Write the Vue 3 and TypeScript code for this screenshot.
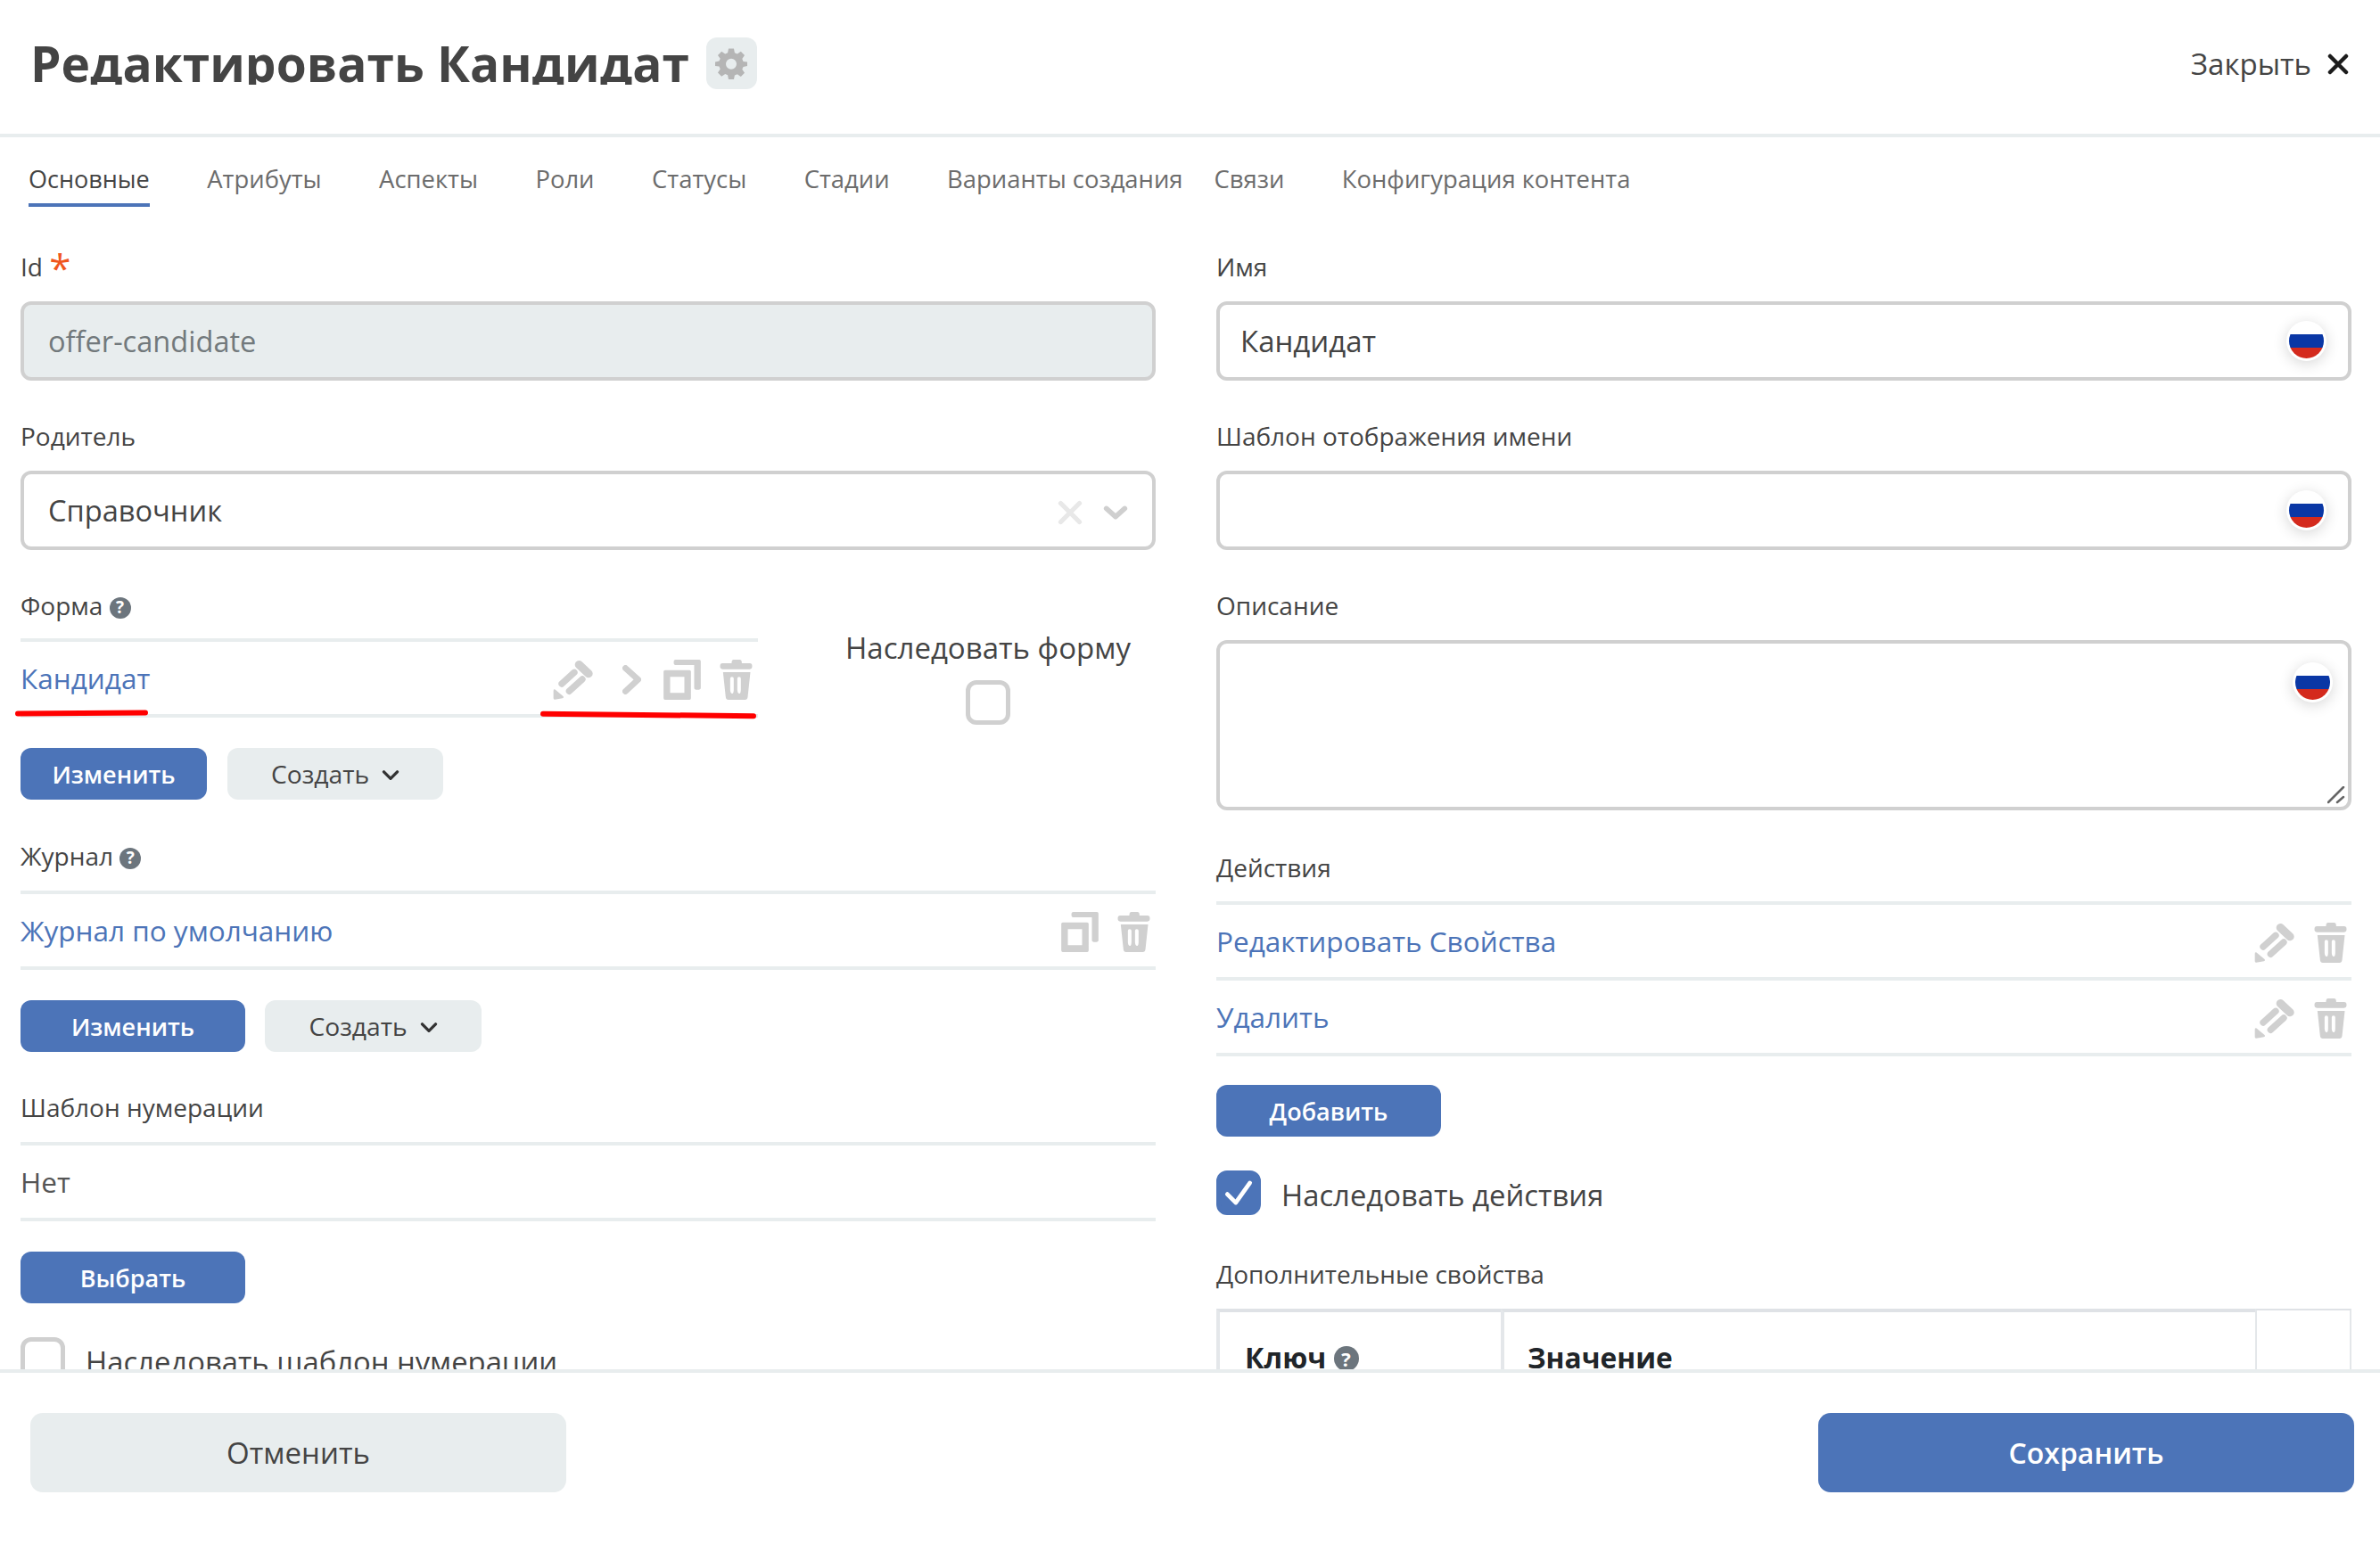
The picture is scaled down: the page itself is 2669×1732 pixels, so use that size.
<template>
  <div class="page">
    <header class="head">
      <h1 class="title">Редактировать Кандидат</h1>
      <button class="gear-btn" type="button">
        <svg class="gear" viewBox="0 0 24 24">
          <path fill-rule="evenodd" d="M10 1h4l.6 3.2 1.900.8L19.200 3.200l2.800 2.800-1.800 2.700.8 1.900L24 11v3l-3 .6-.8 1.900 1.800 2.700-2.800 2.800-2.700-1.800-1.900.8L14 24h-4l-.6-3.200-1.900-.8-2.700 1.800L2 19l1.800-2.700-.8-1.900L0 14v-3l3-.6.8-1.900L2 6l2.800-2.800L7.500 5l1.900-.8zM12 8.500a4 4 0 1 0 0 8 4 4 0 0 0 0-8z" />
        </svg>
      </button>
      <div class="close">
        <span>Закрыть</span>
        <svg class="close-x" viewBox="0 0 24 24">
          <path d="M3 3l18 18M21 3L3 21" />
        </svg>
      </div>
    </header>

    <nav class="tabs">
      <a
        v-for="tab in tabs"
        :key="tab.name"
        class="tab"
        :class="{ active: tab.active, tight: tab.tight }"
      >{{ tab.name }}</a>
    </nav>

    <main class="body">
      <section class="col">
        <div class="label">Id <span class="req">*</span></div>
        <div class="box disabled">offer-candidate</div>

        <div class="label next">Родитель</div>
        <div class="box select">
          <span>Справочник</span>
          <svg class="sel-x" viewBox="0 0 24 24"><path d="M3 3l18 18M21 3L3 21" /></svg>
          <svg class="sel-down" viewBox="0 0 24 14"><path d="M3 3l9 8 9-8" /></svg>
        </div>

        <div class="form-wrap">
          <div class="form-main">
            <div class="label">Форма <span class="hint">?</span></div>
            <div class="row">
              <a class="link">Кандидат</a>
              <div class="icons">
                <svg class="ic pencil" viewBox="88 60 138 135"><use href="#ic-pencil" /></svg>
                <svg class="ic chev" viewBox="318 78 62 97"><path d="M328 88l42 38-42 39" fill="none" stroke="currentColor" stroke-width="20" stroke-linecap="round" stroke-linejoin="round" /></svg>
                <svg class="ic copy" viewBox="460 60 125 135"><use href="#ic-copy" /></svg>
                <svg class="ic trash" viewBox="650 60 108 135"><use href="#ic-trash" /></svg>
              </div>
              <span class="mark mark-a"></span>
              <span class="mark mark-b"></span>
            </div>
            <div class="btns">
              <button class="btn primary w-a" type="button">Изменить</button>
              <button class="btn light w-b" type="button">
                Создать
                <svg class="caret" viewBox="0 0 24 14"><path d="M3 2l9 9 9-9" /></svg>
              </button>
            </div>
          </div>
          <div class="form-side">
            <div class="side-text">Наследовать форму</div>
            <span class="check"></span>
          </div>
        </div>

        <div class="label journal">Журнал <span class="hint">?</span></div>
        <div class="row">
          <a class="link">Журнал по умолчанию</a>
          <div class="icons">
            <svg class="ic copy" viewBox="460 60 125 135"><use href="#ic-copy" /></svg>
            <svg class="ic trash" viewBox="650 60 108 135"><use href="#ic-trash" /></svg>
          </div>
        </div>
        <div class="btns tight-gap">
          <button class="btn primary w-c" type="button">Изменить</button>
          <button class="btn light w-d" type="button">
            Создать
            <svg class="caret" viewBox="0 0 24 14"><path d="M3 2l9 9 9-9" /></svg>
          </button>
        </div>

        <div class="label next numbering">Шаблон нумерации</div>
        <div class="row plain">Нет</div>
        <div class="btns">
          <button class="btn primary w-c" type="button">Выбрать</button>
        </div>

        <div class="check-row">
          <span class="check"></span>
          <span class="check-text">Наследовать шаблон нумерации</span>
        </div>
      </section>

      <section class="col">
        <div class="label">Имя</div>
        <div class="box text">
          Кандидат
          <span class="flag"><i></i></span>
        </div>

        <div class="label next">Шаблон отображения имени</div>
        <div class="box text">
          <span class="flag"><i></i></span>
        </div>

        <div class="label next">Описание</div>
        <div class="box area">
          <span class="flag"><i></i></span>
          <svg class="grip" viewBox="0 0 20 20"><path d="M1 18L18 1M11 18l7-6" /></svg>
        </div>

        <div class="label actions-label">Действия</div>
        <div class="list">
          <div v-for="action in actions" :key="action" class="row list-row">
            <a class="link">{{ action }}</a>
            <div class="icons">
              <svg class="ic pencil" viewBox="88 60 138 135"><use href="#ic-pencil" /></svg>
              <svg class="ic trash" viewBox="650 60 108 135"><use href="#ic-trash" /></svg>
            </div>
          </div>
        </div>
        <div class="btns add">
          <button class="btn primary w-c" type="button">Добавить</button>
        </div>

        <div class="check-row">
          <span class="check on">
            <svg viewBox="0 0 24 24"><path d="M4 13l6 6L20 5" /></svg>
          </span>
          <span class="check-text">Наследовать действия</span>
        </div>

        <div class="label props">Дополнительные свойства</div>
        <div class="props-table">
          <div class="cell key">Ключ <span class="hint big">?</span></div>
          <div class="cell val">Значение</div>
          <div class="cell end"></div>
        </div>
      </section>
    </main>

    <footer class="foot">
      <button class="foot-btn cancel" type="button">Отменить</button>
      <button class="foot-btn save" type="button">Сохранить</button>
    </footer>

    <svg class="defs" width="0" height="0">
      <defs>
        <g id="ic-pencil" fill="currentColor" stroke="currentColor" stroke-linecap="round" stroke-linejoin="round">
          <path d="M176 77l32 30" stroke-width="28" />
          <path d="M118 141l42-38M143 166l44-40" stroke-width="22" />
          <path d="M94 164l26 22-26 4z" stroke-width="8" />
        </g>
        <path id="ic-copy" fill="currentColor" fill-rule="evenodd" d="M465 95h82q5 0 5 5v90q0 5-5 5h-82q-5 0-5-5v-90q0-5 5-5zM482 118v54h48v-54zM500 60h80q5 0 5 5v90q0 6-11 6t-11-6V78h-63q-6 0-6-9t6-9z" />
        <path id="ic-trash" fill="currentColor" fill-rule="evenodd" d="M695 60h22q6 0 6 8v4h27q8 0 8 10t-8 10h-92q-8 0-8-10t8-10h31v-4q0-8 6-8zM660 102h92l-9 84q-1 9-9 9h-56q-8 0-9-9zM684 124v36q0 12 6 14t6-14v-36q0-6-6-6t-6 6zM708 124v36q0 12 6 14t6-14v-36q0-6-6-6t-6 6z" />
      </defs>
    </svg>
  </div>
</template>

<script setup lang="ts">
interface Tab {
  name: string
  active?: boolean
  tight?: boolean
}

const tabs: Tab[] = [
  { name: 'Основные', active: true },
  { name: 'Атрибуты' },
  { name: 'Аспекты' },
  { name: 'Роли' },
  { name: 'Статусы' },
  { name: 'Стадии' },
  { name: 'Варианты создания', tight: true },
  { name: 'Связи' },
  { name: 'Конфигурация контента' },
]

const actions: string[] = ['Редактировать Свойства', 'Удалить']
</script>

<style scoped>
.page {
  width: 2669px;
  height: 1732px;
  display: flex;
  flex-direction: column;
  background: #fff;
  color: #444;
  font-family: 'Open Sans', 'Noto Sans', sans-serif;
  overflow: hidden;
}
.defs {
  position: absolute;
}

/* шапка */
.head {
  flex: none;
  height: 150px;
  box-sizing: content-box;
  display: flex;
  align-items: flex-start;
  padding: 0 35px 0 34px;
  border-bottom: 4px solid #e8edee;
}
.title {
  margin: 43px 0 0;
  height: 52px;
  overflow: hidden;
  font-size: 55px;
  line-height: 55px;
  font-weight: 700;
  color: #444;
}
.gear-btn {
  width: 57px;
  height: 58px;
  margin: 42px 0 0 19px;
  padding: 0;
  display: flex;
  align-items: center;
  justify-content: center;
  border: 0;
  border-radius: 12px;
  background: #e8edee;
}
.gear {
  width: 36px;
  height: 36px;
  fill: #b5b5b5;
}
.close {
  margin: 49px 0 0 auto;
  display: flex;
  align-items: center;
  gap: 18px;
  font-size: 33px;
  line-height: 45px;
  color: #444;
}
.close-x {
  width: 24px;
  height: 24px;
  fill: none;
  stroke: #1c1c1c;
  stroke-width: 4.5;
  stroke-linecap: round;
}

/* вкладки */
.tabs {
  flex: none;
  height: 78px;
  display: flex;
  padding-left: 32px;
  gap: 64.5px;
}
.tab {
  height: 78px;
  box-sizing: border-box;
  padding-top: 28px;
  font-size: 27.4px;
  line-height: 38px;
  color: #6c6c6c;
  white-space: nowrap;
}
.tab.active {
  color: #444;
  font-size: 27px;
  font-weight: 500;
  border-bottom: 4px solid #4c74b8;
}
.tab.tight {
  margin-right: -29.500px;
}

/* колонки */
.body {
  flex: 1;
  min-height: 0;
  overflow: hidden;
  display: grid;
  grid-template-columns: 1273px 1273px;
  column-gap: 68px;
  padding: 47px 0 0 23px;
}
.col {
  min-width: 0;
}
.label {
  height: 38px;
  margin-bottom: 21px;
  font-size: 28px;
  line-height: 40px;
  color: #444;
}
.label.next {
  margin-top: 42px;
}
.label.journal {
  margin-top: 43px;
}
.label.actions-label {
  margin: 44px 0 20px;
}
.req {
  color: #f0561d;
  font-size: 44px;
  line-height: 30px;
  vertical-align: -7px;
}
.hint {
  display: inline-flex;
  align-items: center;
  justify-content: center;
  width: 24px;
  height: 24px;
  border-radius: 50%;
  background: #6c757d;
  color: #fff;
  font-size: 19px;
  line-height: 1;
  font-weight: 700;
  vertical-align: 2px;
}
.hint.big {
  width: 28px;
  height: 28px;
  font-size: 22px;
}

.box {
  position: relative;
  height: 89px;
  box-sizing: border-box;
  padding: 0 24px 0 27px;
  display: flex;
  align-items: center;
  border: 4px solid #d0d0d0;
  border-radius: 12px;
  font-size: 32.6px;
  color: #444;
}
.box.text {
  padding-left: 23px;
  font-size: 33px;
}
.box.disabled {
  background: #e8edee;
  color: #72797c;
}
.box.area {
  height: 191px;
}
.select .sel-x {
  width: 28px;
  height: 28px;
  margin: 4px 0 0 auto;
  fill: none;
  stroke: #e8e8e8;
  stroke-width: 4.5;
  stroke-linecap: round;
}
.select .sel-down {
  width: 28px;
  height: 16px;
  margin: 4px 3px 0 23px;
  fill: none;
  stroke: #cfcfcf;
  stroke-width: 5;
  stroke-linecap: round;
  stroke-linejoin: round;
}
.flag {
  position: absolute;
  top: 18px;
  right: 24px;
  width: 45px;
  height: 45px;
  box-sizing: border-box;
  padding: 3px;
  border-radius: 50%;
  background: #fff;
  box-shadow: 0 3px 16px rgba(0, 0, 0, 0.16);
}
.flag i {
  display: block;
  width: 39px;
  height: 39px;
  border-radius: 50%;
  background: linear-gradient(#fff 0 32%, #0a37a5 32% 70%, #d42a1d 70%);
}
.area .flag {
  top: 21px;
  right: 17px;
}
.grip {
  position: absolute;
  right: 3px;
  bottom: 3px;
  width: 20px;
  height: 20px;
  fill: none;
  stroke: #666;
  stroke-width: 2.5;
  stroke-linecap: round;
}

/* строки со ссылками */
.row {
  position: relative;
  height: 89px;
  box-sizing: border-box;
  display: flex;
  align-items: center;
  justify-content: space-between;
  border-top: 4px solid #e8edee;
  border-bottom: 4px solid #e8edee;
}
.plain {
  font-size: 31.5px;
  color: #555;
}
.link {
  font-size: 31.5px;
  color: #4c74b8;
}
.icons {
  display: flex;
  align-items: center;
  gap: 21px;
  padding: 4px 6px 0 0;
  color: #d0d0d0;
}
.ic {
  height: 45px;
  flex: none;
}
.ic.pencil {
  width: 46px;
}
.ic.chev {
  width: 21px;
  height: 33px;
  margin: 0 4px 0 11px;
}
.ic.copy {
  width: 42px;
}
.ic.trash {
  width: 37px;
}
.mark {
  position: absolute;
  height: 6px;
  border-radius: 3px;
  background: #f00;
}
.mark-a {
  left: -6px;
  top: 77px;
  width: 149px;
  transform: rotate(-0.4deg);
}
.mark-b {
  left: 583px;
  top: 79px;
  width: 242px;
  transform: rotate(0.6deg);
}

/* кнопки */
.btns {
  display: flex;
  gap: 23px;
  margin-top: 34px;
}
.btns.tight-gap {
  gap: 22px;
}
.btns.add {
  margin-top: 1px;
}
.btn {
  height: 58px;
  padding: 0;
  display: flex;
  align-items: center;
  justify-content: center;
  gap: 14px;
  border: 0;
  border-radius: 12px;
  font-family: inherit;
  font-size: 27px;
}
.primary {
  background: #4c74b8;
  color: #fff;
  font-weight: 600;
}
.light {
  background: #e8edee;
  color: #444;
  font-size: 28.2px;
}
.w-a {
  width: 209px;
}
.w-b {
  width: 242px;
}
.w-c {
  width: 252px;
}
.w-d {
  width: 243px;
}
.caret {
  width: 20px;
  height: 12px;
  margin-top: 4px;
  fill: none;
  stroke: #333;
  stroke-width: 4;
  stroke-linecap: round;
  stroke-linejoin: round;
}

/* форма и наследование */
.form-wrap {
  display: flex;
  margin-top: 42px;
}
.form-main {
  width: 827px;
  flex: none;
}
.form-main .label {
  margin-bottom: 19px;
}
.form-side {
  flex: 1;
  margin-left: 70px;
  padding-top: 44px;
  display: flex;
  flex-direction: column;
  align-items: center;
  gap: 12px;
}
.side-text {
  font-size: 33px;
  line-height: 48px;
  white-space: nowrap;
}
.check {
  display: flex;
  align-items: center;
  justify-content: center;
  width: 50px;
  height: 50px;
  flex: none;
  box-sizing: border-box;
  border: 5px solid #d0d0d0;
  border-radius: 12px;
  background: #fff;
}
.check.on {
  border-color: #4c74b8;
  background: #4c74b8;
}
.check.on svg {
  width: 38px;
  height: 38px;
  fill: none;
  stroke: #fff;
  stroke-width: 3;
  stroke-linecap: round;
  stroke-linejoin: round;
}
.check-row {
  display: flex;
  align-items: flex-start;
  gap: 23px;
  margin-top: 38px;
}
.check-text {
  padding-top: 4px;
  font-size: 32.8px;
  line-height: 48px;
  color: #444;
  white-space: nowrap;
}

/* действия */
.list {
  margin-bottom: 32px;
}
.list-row {
  height: 89px;
}
.list-row + .list-row {
  border-top: 0;
  height: 85px;
}
.list-row .icons {
  padding-right: 5px;
}
.props {
  margin-top: 44px;
  margin-bottom: 21px;
}
.props-table {
  display: grid;
  grid-template-columns: 319px 846px 108px;
  height: 200px;
}
.cell {
  box-sizing: border-box;
  padding: 29px 0 0 28px;
  border-top: 4px solid #dfe2e6;
  border-left: 4px solid #e4e7ea;
  font-size: 32px;
  line-height: 44px;
  font-weight: 700;
  color: #212529;
}
.cell.val {
  padding-left: 26px;
  font-size: 31.7px;
}
.cell.end {
  border-top-width: 2px;
  border-left-width: 2px;
  border-right: 2px solid #e4e7ea;
}

/* подвал */
.foot {
  flex: none;
  height: 196px;
  box-sizing: border-box;
  display: flex;
  justify-content: space-between;
  padding: 45px 29px 0 34px;
  border-top: 4px solid #e8edee;
  background: #fff;
}
.foot-btn {
  width: 601px;
  height: 89px;
  border: 0;
  border-radius: 14px;
  font-family: inherit;
  font-size: 33px;
}
.cancel {
  background: #e8edee;
  color: #444;
}
.save {
  background: #4c74b8;
  color: #fff;
  font-weight: 600;
  font-size: 32px;
}
</style>
